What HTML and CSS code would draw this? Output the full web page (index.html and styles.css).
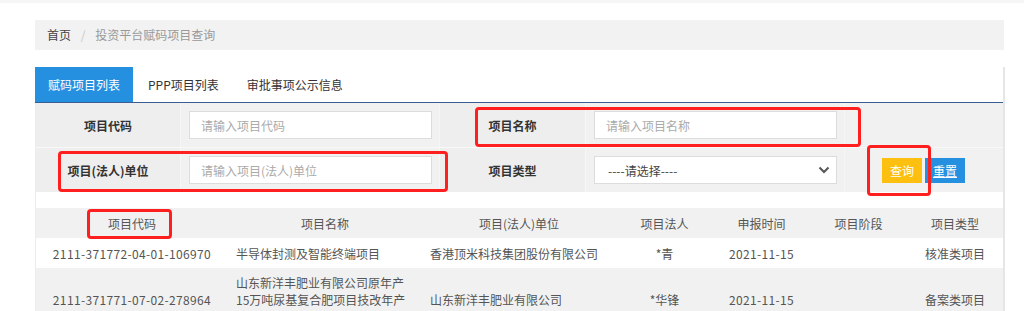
FILE: index.html
```html
<!DOCTYPE html>
<html lang="zh-CN">
<head>
    <meta charset="UTF-8">
    <meta name="viewport" content="width=device-width, initial-scale=1.0">
    <title>投资平台赋码项目查询</title>
    <link rel="stylesheet" href="styles.css">
</head>
<body>
    <div class="topbar"></div>
    <div class="page">
        <div class="breadcrumb">
            <a href="#">首页</a>
            <span class="sep">/</span>
            <span class="current">投资平台赋码项目查询</span>
        </div>

        <div class="panel">
            <ul class="tabs">
                <li class="active">赋码项目列表</li>
                <li>PPP项目列表</li>
                <li>审批事项公示信息</li>
            </ul>

            <form class="search" onsubmit="return false;">
                <div class="cell label">项目代码</div>
                <div class="cell field"><input type="text" placeholder="请输入项目代码"></div>
                <div class="cell label">项目名称</div>
                <div class="cell field"><input type="text" placeholder="请输入项目名称"></div>
                <div class="cell"></div>

                <div class="cell label">项目(法人)单位</div>
                <div class="cell field"><input type="text" placeholder="请输入项目(法人)单位"></div>
                <div class="cell label">项目类型</div>
                <div class="cell field">
                    <div class="select-wrap">
                        <select>
                            <option>----请选择----</option>
                            <option>核准类项目</option>
                            <option>备案类项目</option>
                        </select>
                        <svg class="chevron" width="12" height="8" viewBox="0 0 12 8">
                            <path d="M1.5 1.5 L6 6 L10.5 1.5" fill="none" stroke="#555" stroke-width="2"/>
                        </svg>
                    </div>
                </div>
                <div class="cell actions">
                    <button type="submit" class="btn btn-query">查询</button>
                    <a href="#" class="btn btn-reset">重置</a>
                </div>
            </form>

            <table class="result">
                <colgroup>
                    <col class="w-code">
                    <col class="w-wide">
                    <col class="w-wide">
                    <col class="w-narrow">
                    <col class="w-narrow">
                    <col class="w-narrow">
                    <col class="w-last">
                </colgroup>
                <thead>
                    <tr>
                        <th>项目代码</th>
                        <th>项目名称</th>
                        <th>项目(法人)单位</th>
                        <th>项目法人</th>
                        <th>申报时间</th>
                        <th>项目阶段</th>
                        <th>项目类型</th>
                    </tr>
                </thead>
                <tbody>
                    <tr>
                        <td class="num">2111-371772-04-01-106970</td>
                        <td class="left">半导体封测及智能终端项目</td>
                        <td class="left">香港顶米科技集团股份有限公司</td>
                        <td>*青</td>
                        <td class="num">2021-11-15</td>
                        <td></td>
                        <td>核准类项目</td>
                    </tr>
                    <tr>
                        <td class="num">2111-371771-07-02-278964</td>
                        <td class="left">山东新洋丰肥业有限公司原年产15万吨尿基复合肥项目技改年产30万吨新型肥料项目</td>
                        <td class="left">山东新洋丰肥业有限公司</td>
                        <td>*华锋</td>
                        <td class="num">2021-11-15</td>
                        <td></td>
                        <td>备案类项目</td>
                    </tr>
                </tbody>
            </table>
        </div>
    </div>

    <!-- annotation boxes drawn over the screenshot -->
    <div class="mark mark-name"></div>
    <div class="mark mark-unit"></div>
    <div class="mark mark-btn"></div>
    <div class="mark mark-code"></div>
</body>
</html>
```

FILE: styles.css
```css
/* General Reset */
* {
    margin: 0;
    padding: 0;
    box-sizing: border-box;
}

body {
    font-family: "Noto Sans CJK SC", "Noto Sans", sans-serif;
    font-size: 12px;
    color: #333;
    background: #fff;
    position: relative;
    overflow: hidden;
}

.topbar {
    height: 3px;
    background: #f6f6f6;
}

.page {
    padding: 17px 0 0 35px;
}

/* Breadcrumb */
.breadcrumb {
    width: 969px;
    height: 30px;
    line-height: 30px;
    padding-left: 12px;
    background: #f2f2f2;
}

.breadcrumb a {
    color: #444;
    text-decoration: none;
}

.breadcrumb .sep {
    color: #c8c8c8;
    margin: 0 7px;
}

.breadcrumb .current {
    color: #999;
}

/* Panel */
.panel {
    width: 970px;
    margin-top: 17px;
    border-left: 1px solid #ececec;
    border-right: 2px solid #e6e6e6;
}

.tabs {
    display: flex;
    list-style: none;
    height: 36px;
    margin-left: -1px;
    border-bottom: 1px solid #3a5e93;
}

.tabs li {
    height: 35px;
    line-height: 35px;
    padding: 0 13px 0 13px;
    margin-right: 2px;
    color: #333;
    cursor: pointer;
}

.tabs li.active {
    background: #2590e0;
    color: #fff;
    padding: 0 13px;
}

/* Search form */
.search {
    display: grid;
    grid-template-columns: 144px 260px 145px 260px 158px;
    grid-auto-rows: 44px;
    row-gap: 1px;
    background: #f8f8f8;
}

.cell {
    display: flex;
    align-items: center;
    background: #f1f1f1;
}

.cell.label {
    justify-content: center;
    font-weight: bold;
    color: #333;
    background: #eeeeee;
}

.cell.field {
    padding: 0 7px 0 8px;
    border-left: 1px solid #f6f6f6;
    border-right: 1px solid #f6f6f6;
}

.cell.field input,
.cell.field select {
    width: 100%;
    height: 28px;
    border: 1px solid #dcdcdc;
    background: #fff;
    padding: 0 11px;
    font-family: inherit;
    font-size: 12px;
    color: #333;
    outline: none;
}

.cell.field input::placeholder {
    color: #aaa;
}

.select-wrap {
    position: relative;
    width: 100%;
}

.cell.field select {
    appearance: none;
    -webkit-appearance: none;
    padding-left: 13px;
    color: #444;
}

.chevron {
    position: absolute;
    right: 7px;
    top: 10px;
}

.cell.actions {
    padding-left: 37px;
    gap: 3px;
}

.btn {
    display: inline-block;
    width: 40px;
    height: 25px;
    line-height: 25px;
    text-align: center;
    border: none;
    color: #fff;
    font-family: inherit;
    font-size: 12px;
    cursor: pointer;
}

.btn-query {
    background: #fdbf10;
}

.btn-reset {
    background: #2590e0;
    text-decoration: underline;
}

/* Result table */
.result {
    width: 967px;
    margin-top: 16px;
    border-collapse: collapse;
    table-layout: fixed;
    color: #555;
}

.w-code { width: 192px; }
.w-wide { width: 194px; }
.w-narrow { width: 97px; }
.w-last { width: 96px; }

.result th,
.result td {
    height: 30px;
    text-align: center;
    font-weight: normal;
    padding: 6px 8px;
    line-height: 17px;
    vertical-align: middle;
}

.result thead tr {
    background: #f1f1f1;
}

.result tbody tr:nth-child(even) {
    background: #f1f1f1;
}

.result td.left {
    text-align: left;
}

.result td.num {
    letter-spacing: 0.35px;
}

/* Red annotation boxes */
.mark {
    position: absolute;
    border: 3px solid #ff1f1f;
    border-radius: 4px;
    pointer-events: none;
}

.mark-name {
    left: 475px;
    top: 107px;
    width: 386px;
    height: 40px;
}

.mark-unit {
    left: 58px;
    top: 151px;
    width: 390px;
    height: 41px;
}

.mark-btn {
    left: 867px;
    top: 145px;
    width: 64px;
    height: 51px;
}

.mark-code {
    left: 87px;
    top: 209px;
    width: 85px;
    height: 30px;
}
```
